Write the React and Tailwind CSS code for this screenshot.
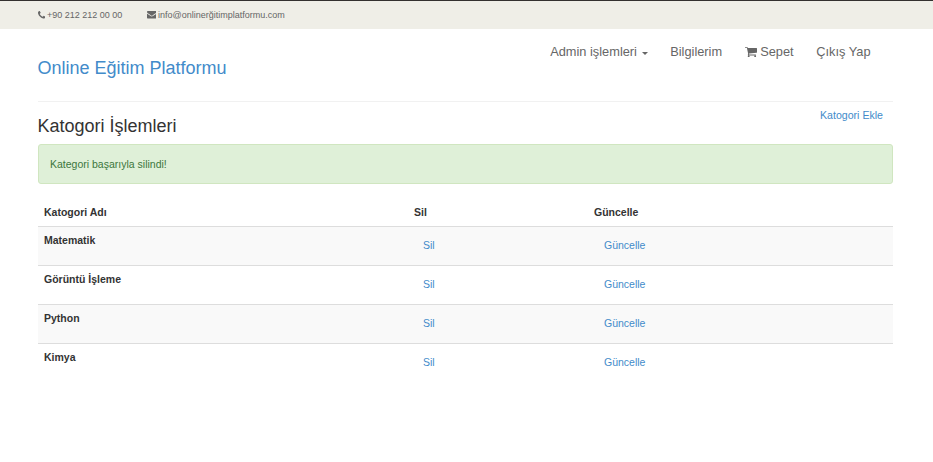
import React from "react";

const categories = ["Matematik", "Görüntü İşleme", "Python", "Kimya"];

function PhoneIcon() {
  return (
    <svg viewBox="0 0 1408 1408" className="h-[7.5px] w-[7.5px]" fill="currentColor">
      <path d="M1408 1112q0 27-10 70.500t-21 68.500q-21 50-122 106-94 51-186 51-27 0-53-3.500t-57.500-12.500-47-14.500-55.500-20.500-49-18q-98-35-175-83-127-79-264-216t-216-264q-48-77-83-175-3-9-18-49t-20.500-55.500-14.500-47-12.500-57.500-3.500-53q0-92 51-186 56-101 106-122 25-11 68.500-21t70.500-10q14 0 21 3 18 6 53 76 11 19 30 54t35 63.500 31 53.500q3 4 17.500 25t21.500 35.500 7 28.500q0 20-28.500 50t-62 55-62 53-28.500 46q0 9 5 22.500t8.500 20.500 14 24 11.500 19q76 137 174 235t235 174q2 1 19 11.500t24 14 20.500 8.500 22.500 5q18 0 46-28.500t53-62 55-62 50-28.500q14 0 28.500 7t35.500 21.500 25 17.500q25 15 53.500 31t63.500 35 54 30q70 35 76 53 3 7 3 21z" />
    </svg>
  );
}

function EnvelopeIcon() {
  return (
    <svg viewBox="0 256 1792 1408" className="h-[7.5px] w-[9.5px]" fill="currentColor">
      <path d="M1792 710v794q0 66-47 113t-113 47h-1472q-66 0-113-47t-47-113v-794q44 49 101 87 362 246 497 345 57 42 92.500 65.500t94.500 48 110 24.500h2q51 0 110-24.500t94.500-48 92.500-65.500q170-123 498-345 57-39 100-87zm0-294q0 79-49 151t-122 123q-376 261-468 325-10 7-42.500 31t-54 38.500-52 32.500-57.500 27-50 9h-2q-23 0-50-9t-57.500-27-52-32.500-54-38.500-42.500-31q-91-64-262-182.500t-205-142.500q-62-42-117-115.500t-55-136.500q0-78 41.500-130t118.500-52h1472q65 0 112.500 47t47.500 113z" />
    </svg>
  );
}

function CartIcon() {
  return (
    <svg viewBox="0 256 1664 1408" className="h-[10.5px] w-[12px]" fill="currentColor">
      <path d="M640 1536q0 52-38 90t-90 38-90-38-38-90 38-90 90-38 90 38 38 90zm896 0q0 52-38 90t-90 38-90-38-38-90 38-90 90-38 90 38 38 90zm128-1088v512q0 24-16.500 42.500t-40.500 21.500l-1044 122q13 60 13 70 0 16-24 64h920q26 0 45 19t19 45-19 45-45 19h-1024q-26 0-45-19t-19-45q0-11 8-31.500t16-36 21.500-40 15.500-29.500l-177-823h-204q-26 0-45-19t-19-45 19-45 45-19h256q16 0 28.500 6.500t19.500 15.500 13 24.500 8 26 5.500 29.500 4.500 26h1201q26 0 45 19t19 45z" />
    </svg>
  );
}

function TopBar() {
  return (
    <div className="flex h-[29px] items-center border-t border-[#33302f] bg-[#efeee7] pl-[37.5px] text-[9px] leading-[14px] text-[#666]">
      <a className="flex w-[109px] items-center gap-[2px]">
        <PhoneIcon />
        <span className="whitespace-nowrap">+90 212 212 00 00</span>
      </a>
      <a className="flex items-center gap-[2px]">
        <EnvelopeIcon />
        <span className="whitespace-nowrap">info@onlinerğitimplatformu.com</span>
      </a>
    </div>
  );
}

function Header() {
  return (
    <header className="ml-[38px] flex h-[73px] w-[855px] justify-between border-b border-[#f1f1f1]">
      <a className="-ml-[0.5px] pt-[27px] text-[18px] leading-[24px] whitespace-nowrap text-[#428bca]">Online Eğitim Platformu</a>
      <nav className="mt-[15px] flex h-[16px] items-center pr-[22.5px] text-[12.8px] leading-[16px] whitespace-nowrap text-[#666]">
        <a className="flex w-[120px] items-center">
          Admin işlemleri
          <span className="mt-[2px] ml-[5px] border-x-[3px] border-t-[3px] border-x-transparent border-t-[#666]" />
        </a>
        <a className="w-[75px]">Bilgilerim</a>
        <a className="flex w-[71px] items-center gap-[3px]">
          <CartIcon />
          Sepet
        </a>
        <a>Çıkış Yap</a>
      </nav>
    </header>
  );
}

export default function App() {
  return (
    <div className="min-h-[462px] w-[933px] bg-white font-['Liberation_Sans',Arial,sans-serif] text-[10.5px] leading-[15px] text-[#333]">
      <TopBar />
      <Header />
      <main className="ml-[38px] w-[855px]">
        <div className="flex h-[42px] justify-between pr-[10px]">
          <h1 className="-ml-[0.5px] pt-[13px] text-[18px] leading-[22px]">Katogori İşlemleri</h1>
          <a className="pt-[6px] text-[10.6px] text-[#428bca]">Katogori Ekle</a>
        </div>
        <div className="flex h-[40px] items-center rounded-[3px] border border-[#d0e6c0] bg-[#dff0d8] px-[11px] text-[#3c763d]">
          Kategori başarıyla silindi!
        </div>
        <table className="mt-[15px] w-full table-fixed border-collapse text-left">
          <colgroup>
            <col className="w-[370px]" />
            <col className="w-[180px]" />
            <col />
          </colgroup>
          <thead>
            <tr className="h-[27px] align-top">
              <th className="px-[6px] pt-[6px]">Katogori Adı</th>
              <th className="px-[6px] pt-[6px]">Sil</th>
              <th className="px-[6px] pt-[6px]">Güncelle</th>
            </tr>
          </thead>
          <tbody>
            {categories.map((name) => (
              <tr key={name} className="h-[39px] border-t border-[#ddd] align-top odd:bg-[#f9f9f9]">
                <th className="px-[6px] pt-[6px]">{name}</th>
                <td className="px-[15px] pt-[11px] text-[#428bca]">Sil</td>
                <td className="px-[16px] pt-[11px] text-[#428bca]">Güncelle</td>
              </tr>
            ))}
          </tbody>
        </table>
      </main>
    </div>
  );
}
